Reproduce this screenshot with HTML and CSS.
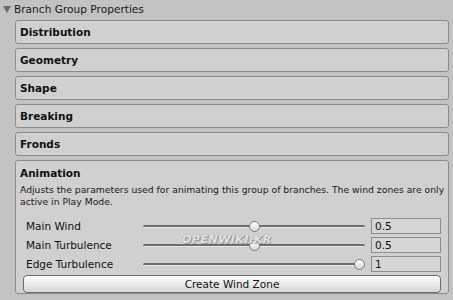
FILE: index.html
```html
<!DOCTYPE html>
<html>
<head>
<meta charset="utf-8">
<link rel="stylesheet" href="styles.css">
</head>
<body>
<div class="inspector">
  <div class="header">
    <span class="tri"></span>
    <span class="header-title">Branch Group Properties</span>
  </div>
  <div class="panels">
    <div class="panel"><span class="panel-title">Distribution</span></div>
    <div class="panel"><span class="panel-title">Geometry</span></div>
    <div class="panel"><span class="panel-title">Shape</span></div>
    <div class="panel"><span class="panel-title">Breaking</span></div>
    <div class="panel"><span class="panel-title">Fronds</span></div>
    <div class="panel panel-open">
      <div class="panel-head"><span class="panel-title">Animation</span></div>
      <p class="desc">Adjusts the parameters used for animating this group of branches. The wind zones are only active in Play Mode.</p>
      <div class="rows">
        <div class="row">
          <span class="label">Main Wind</span>
          <div class="slider"><div class="track"></div><div class="thumb" style="left: calc((100% - 11px) * 0.5)"></div></div>
          <div class="value">0.5</div>
        </div>
        <div class="row">
          <span class="label">Main Turbulence</span>
          <div class="slider"><div class="track"></div><div class="thumb" style="left: calc((100% - 11px) * 0.5)"></div></div>
          <div class="value">0.5</div>
        </div>
        <div class="row">
          <span class="label">Edge Turbulence</span>
          <div class="slider"><div class="track"></div><div class="thumb" style="left: calc((100% - 11px) * 1)"></div></div>
          <div class="value">1</div>
        </div>
      </div>
      <div class="button">Create Wind Zone</div>
    </div>
  </div>
  <div class="watermark">OPENWIKI.KR</div>
</div>
</body>
</html>
```
FILE: styles.css
```css
* { box-sizing: border-box; }
html, body {
  margin: 0;
  padding: 0;
  background: #c2c2c2;
}
body {
  width: 453px;
  height: 300px;
  overflow: hidden;
  font-family: "DejaVu Sans", Verdana, sans-serif;
  color: #111;
}
.inspector {
  position: relative;
  height: 300px;
}
.header {
  height: 20px;
  display: flex;
  align-items: center;
  padding-left: 3px;
  padding-bottom: 2px;
}
.tri {
  width: 0;
  height: 0;
  border-left: 4px solid transparent;
  border-right: 4px solid transparent;
  border-top: 7px solid #6a6a6a;
  margin-right: 3px;
}
.header-title {
  font-size: 10.6px;
  color: #1a1a1a;
}
.panels {
  display: flex;
  flex-direction: column;
  gap: 4px;
  padding: 0 4px 0 15px;
}
.panel {
  height: 24px;
  background: #d0d0d0;
  border: 1px solid #8c8c8c;
  border-radius: 3px;
  display: flex;
  align-items: center;
  padding-left: 4px;
}
.panel-title {
  font-size: 10.5px;
  font-weight: bold;
  color: #111;
}
.panel-open {
  height: 134px;
  display: block;
  padding: 0;
}
.panel-head {
  height: 23px;
  display: flex;
  align-items: center;
  padding-left: 4px;
}
.desc {
  margin: 0;
  padding: 0 2px 0 4px;
  font-size: 9.25px;
  line-height: 12px;
  color: #1a1a1a;
}
.rows {
  margin: 8px 7px 0 7px;
  display: flex;
  flex-direction: column;
}
.row {
  height: 19px;
  display: grid;
  grid-template-columns: 114px 1fr 70px;
  column-gap: 6px;
  align-items: center;
}
.label {
  padding-left: 3px;
  font-size: 10.5px;
  color: #111;
  white-space: nowrap;
}
.slider {
  position: relative;
  height: 12px;
}
.track {
  position: absolute;
  left: 0;
  right: 0;
  top: 5px;
  height: 3px;
  border-radius: 2px;
  background: #6e6e6e;
  border-bottom: 1px solid #eaeaea;
}
.thumb {
  position: absolute;
  top: 1px;
  width: 11px;
  height: 11px;
  border-radius: 50%;
  border: 1px solid #7a7a7a;
  background: linear-gradient(#ffffff, #d8d8d8);
}
.value {
  height: 16px;
  border: 1px solid #8e8e8e;
  background: #d6d6d6;
  font-size: 10.5px;
  line-height: 14px;
  padding-left: 3px;
  color: #111;
}
.button {
  margin: 2px 7px 0 7px;
  height: 18px;
  border: 1px solid #6c6c6c;
  border-radius: 4px;
  background: linear-gradient(#fdfdfd, #e6e6e6 60%, #d6d6d6);
  font-size: 10.5px;
  line-height: 16px;
  text-align: center;
  color: #111;
}
.watermark {
  position: absolute;
  left: 182px;
  top: 233px;
  font-size: 11px;
  font-weight: bold;
  font-style: italic;
  letter-spacing: 0.5px;
  color: #e4e4e4;
  text-shadow: 0 0 1px #888, 1px 1px 0 #999;
  pointer-events: none;
}
```
